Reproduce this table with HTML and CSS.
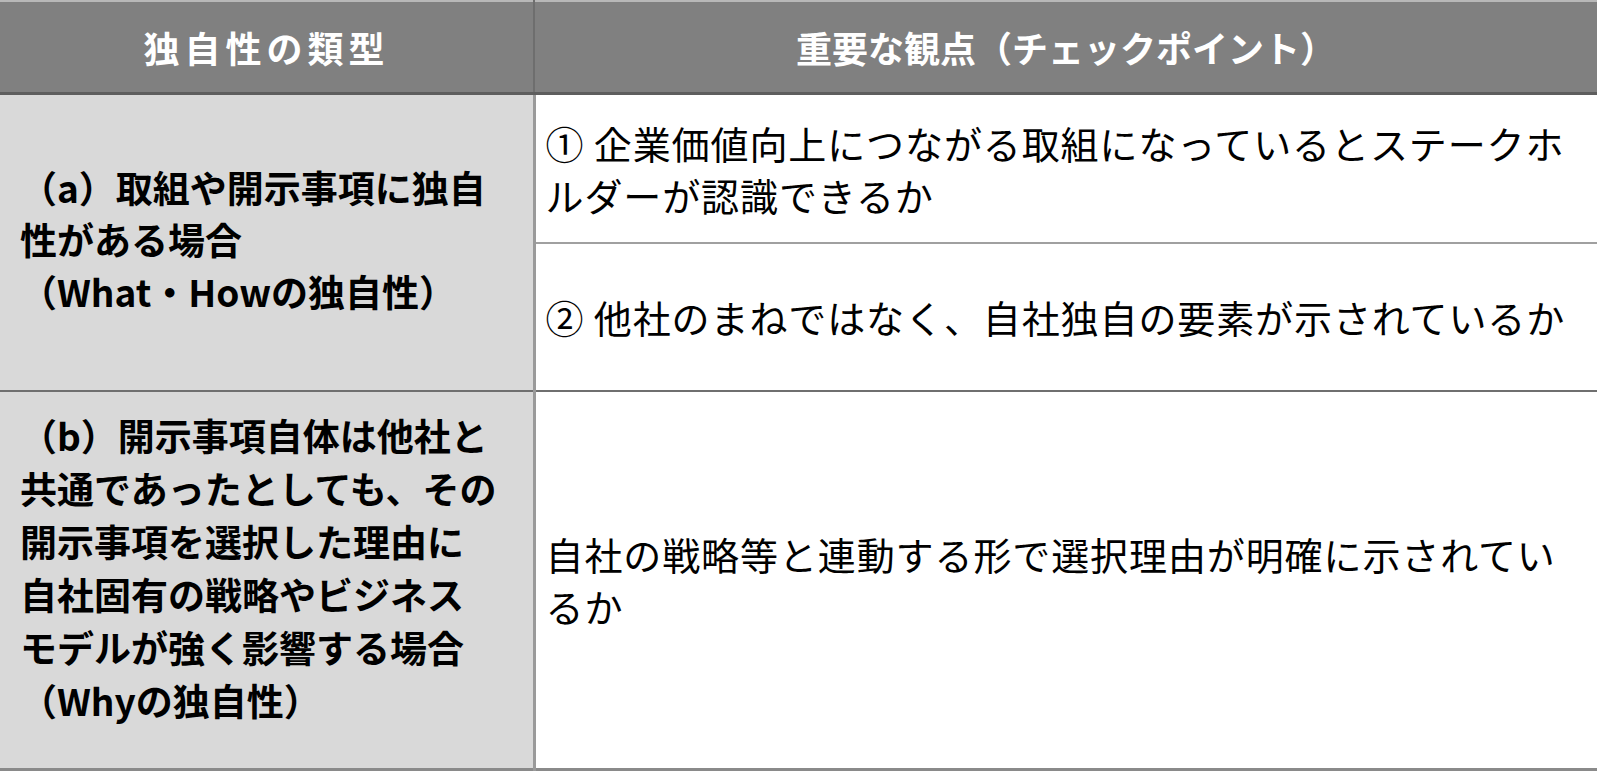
FILE: index.html
```html
<!DOCTYPE html>
<html lang="ja">
<head>
<meta charset="utf-8">
<title>独自性の類型</title>
<link rel="stylesheet" href="styles.css">
</head>
<body>
<table class="grid">
  <thead>
    <tr class="head-row">
      <th class="h-type">独自性の類型</th>
      <th class="h-check">重要な観点（チェックポイント）</th>
    </tr>
  </thead>
  <tbody>
    <tr class="row-a1">
      <td class="type" rowspan="2">（a）取組や開示事項に独自<br>性がある場合<br>（What・Howの独自性）</td>
      <td class="check">① 企業価値向上につながる取組になっているとステークホ<br>ルダーが認識できるか</td>
    </tr>
    <tr class="row-a2">
      <td class="check check-split">② 他社のまねではなく、自社独自の要素が示されているか</td>
    </tr>
    <tr class="row-b">
      <td class="type type-b">（b）開示事項自体は他社と<br>共通であったとしても、その<br>開示事項を選択した理由に<br>自社固有の戦略やビジネス<br>モデルが強く影響する場合<br>（Whyの独自性）</td>
      <td class="check check-b">自社の戦略等と連動する形で選択理由が明確に示されてい<br>るか</td>
    </tr>
  </tbody>
</table>
</body>
</html>
```

FILE: styles.css
```css
html, body {
  margin: 0;
  padding: 0;
  background: #ffffff;
}

body {
  font-family: "Noto Sans CJK JP", "Noto Sans", sans-serif;
  color: #000000;
}

.grid {
  width: 1597px;
  border-collapse: collapse;
  table-layout: fixed;
  border-top: 2px solid #b8b8b8;
  border-bottom: 3px solid #8a8a8a;
}

.head-row th {
  height: 90px;
  background: #808080;
  color: #ffffff;
  font-size: 36px;
  font-weight: 700;
  text-align: center;
  vertical-align: middle;
  border-bottom: 3px solid #5e5e5e;
  padding: 0;
}

.h-type {
  width: 533px;
  border-right: 2px solid #6e6e6e;
  letter-spacing: 5px;
}

.type {
  background: #d9d9d9;
  font-size: 37px;
  font-weight: 700;
  line-height: 52px;
  padding: 0 0 8px 20px;
  vertical-align: middle;
  border-right: 3px solid #9a9a9a;
  border-bottom: 2px solid #6f6f6f;
}

.type-b {
  line-height: 53px;
  padding-bottom: 24px;
  height: 340px;
}

.check {
  font-size: 38px;
  font-weight: 400;
  line-height: 52px;
  padding: 0 0 0 10px;
  vertical-align: middle;
  letter-spacing: 0.9px;
  white-space: nowrap;
}

.row-a1 .check {
  height: 147px;
  border-bottom: 2px solid #a0a0a0;
}

.row-a2 .check {
  height: 146px;
  border-bottom: 2px solid #6f6f6f;
}

.check-b {
  height: 376px;
}
```
